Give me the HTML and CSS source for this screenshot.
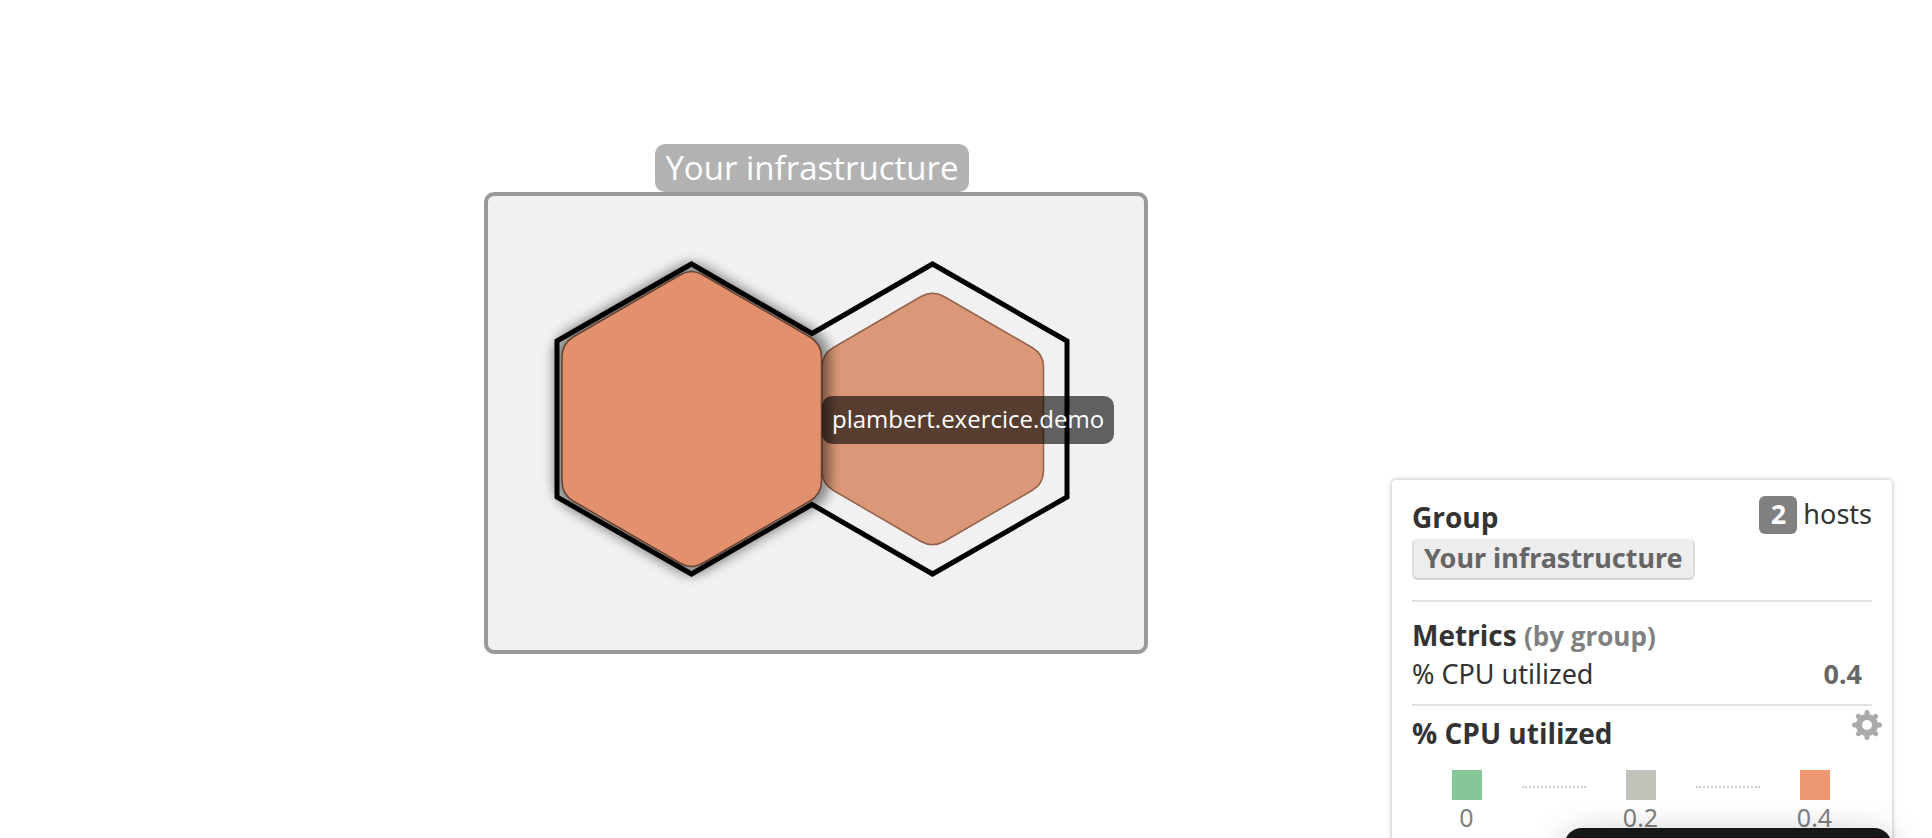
FILE: index.html
```html
<!DOCTYPE html>
<html lang="en">
<head>
<meta charset="utf-8">
<title>Host map</title>
<link rel="stylesheet" href="styles.css">
</head>
<body>
<main class="map">
  <section class="group" aria-labelledby="group-name">
    <h1 class="group-name" id="group-name">Your infrastructure</h1>
    <div class="group-box">
      <svg class="hosts" viewBox="488 196 656 454" aria-hidden="true">
        <defs>
          <filter id="shadow" x="-20%" y="-20%" width="140%" height="140%">
            <feGaussianBlur stdDeviation="6"/>
          </filter>
        </defs>
        <path class="hex hex-dim" d="M921 296.500Q932.500 290 944 296.500L1032 347.500Q1043.500 354 1043.500 367V471Q1043.500 484 1032 490.500L944 541.500Q932.500 548 921 541.500L833.500 490.500Q822 484 822 471V367Q822 354 833.500 347.500Z"/>
        <path class="hex-shadow" filter="url(#shadow)" d="M680 275Q691.500 268 703 275L810 337Q821.500 344 821.500 357V481Q821.500 494 810 501L703 563Q691.500 570 680 563L573 501Q562 494 562 481V357Q562 344 573 337Z"/>
        <path class="outline" d="M691.500 264L812 333.500L932.500 264L1067 341V497L932.500 574L812 504.500L691.500 574L557 497V341Z"/>
        <path class="hex hex-active" d="M680 275Q691.500 268 703 275L810 337Q821.500 344 821.500 357V481Q821.500 494 810 501L703 563Q691.500 570 680 563L573 501Q562 494 562 481V357Q562 344 573 337Z"/>
      </svg>
      <div class="tooltip" role="tooltip">plambert.exercice.demo</div>
    </div>
  </section>
</main>
<aside class="panel">
  <header class="panel-head">
    <div>
      <h2 class="title">Group</h2>
      <span class="tag">Your infrastructure</span>
    </div>
    <p class="count"><strong class="badge">2</strong>hosts</p>
  </header>
  <section class="metrics">
    <h2 class="title">Metrics <span class="muted">(by group)</span></h2>
    <div class="metric"><span>% CPU utilized</span><strong>0.4</strong></div>
  </section>
  <section class="scale">
    <h2 class="title">% CPU utilized</h2>
    <button class="settings" type="button" aria-label="Settings">
      <svg class="gear" viewBox="-15 -15 30 30" aria-hidden="true">
        <g class="teeth">
          <path d="M0-12.500V12.500M-12.500 0H12.500M-8.700-8.700L8.700 8.700M-8.700 8.700L8.700-8.700"/>
        </g>
        <circle class="gear-body" r="11"/>
        <circle class="gear-hole" r="5"/>
      </svg>
    </button>
    <div class="legend">
      <div class="stop"><span class="swatch low"></span>0</div>
      <span class="dots"></span>
      <div class="stop"><span class="swatch mid"></span>0.2</div>
      <span class="dots"></span>
      <div class="stop"><span class="swatch high"></span>0.4</div>
    </div>
  </section>
</aside>
<div class="dock"></div>
</body>
</html>
```
FILE: styles.css
```css
* { box-sizing: border-box; }

body {
  margin: 0;
  height: 100vh;
  overflow: hidden;
  position: relative;
  background: #fff;
  color: #333;
  font-family: "Open Sans", "Noto Sans", sans-serif;
  font-size: 27px;
  line-height: 36px;
}

h1, h2, p { margin: 0; }

.map { padding: 144px 0 0 484px; }

.group {
  width: 664px;
  display: flex;
  flex-direction: column;
  align-items: center;
}

.group-name {
  margin-right: 8px;
  padding: 0 10px;
  border-radius: 10px;
  background: #b2b2b2;
  color: #fff;
  font-size: 33px;
  font-weight: 400;
  line-height: 48px;
}

.group-box {
  position: relative;
  width: 100%;
  border: 4px solid #999;
  border-radius: 10px;
  background: #f1f1f1;
}

.hosts { display: block; width: 100%; }

.hex { stroke-width: 1.500px; }
.hex-dim { fill: #da9878; stroke: #93614a; }
.hex-active { fill: #e2906d; stroke: #65412f; }
.hex-shadow { fill: #000; stroke: #000; stroke-width: 17px; opacity: .44; }
.outline { fill: none; stroke: #000; stroke-width: 5px; }

.tooltip {
  position: absolute;
  left: 334px;
  top: 200px;
  padding: 0 10px 2px;
  border-radius: 10px;
  background: rgba(0, 0, 0, .6);
  color: #fff;
  font-size: 24px;
  line-height: 46px;
  white-space: nowrap;
}

.panel {
  position: absolute;
  top: 480px;
  right: 40px;
  width: 500px;
  padding: 16px 20px 24px;
  border-radius: 4px;
  background: #fff;
  box-shadow: 0 0 5px rgba(0, 0, 0, .3);
}

.panel-head {
  display: flex;
  justify-content: space-between;
  align-items: flex-start;
  padding-bottom: 20px;
}

.title { font-size: 28px; font-weight: 700; line-height: 42px; }
.muted { color: #808080; font-size: 26px; line-height: 26px; }

.tag {
  display: block;
  padding: 0 10px 2px;
  border: 2px solid #ddd;
  border-top-color: #f1f1f1;
  border-bottom-color: #d2d2d2;
  border-radius: 6px;
  background: #ededed;
  color: #666;
  font-family: "Noto Sans", "Open Sans", sans-serif;
  font-weight: 700;
  line-height: 36px;
}

.count {
  display: flex;
  gap: 6px;
  font-family: "Noto Sans", "Open Sans", sans-serif;
}

.badge {
  width: 38px;
  height: 38px;
  border-radius: 6px;
  background: #808080;
  color: #fff;
  text-align: center;
}

.metrics {
  padding: 12px 0;
  border-top: 2px solid #e1e1e1;
  border-bottom: 2px solid #e1e1e1;
}

.metric {
  display: flex;
  justify-content: space-between;
  padding-right: 10px;
  font-family: "Noto Sans", "Open Sans", sans-serif;
}

.metric strong { color: #666; }

.scale { position: relative; padding-top: 6px; }

.settings {
  position: absolute;
  top: 4px;
  right: -10px;
  width: 30px;
  height: 30px;
  padding: 0;
  border: 0;
  background: none;
}

.gear { display: block; }
.teeth { stroke: #aaa; stroke-width: 5px; stroke-linecap: round; }
.gear-body { fill: #aaa; }
.gear-hole { fill: #fff; }

.legend {
  display: grid;
  grid-template-columns: repeat(5, 1fr);
  padding: 16px 14px 0 11px;
  color: #808080;
  font-family: "Noto Sans", "Open Sans", sans-serif;
  font-size: 25px;
  line-height: 34px;
}

.stop {
  display: flex;
  flex-direction: column;
  align-items: center;
}

.swatch { width: 30px; height: 30px; }
.low { background: #85c799; }
.mid { background: #c3c2ba; }
.high { background: #ee9872; }

.dots {
  width: 64px;
  height: 18px;
  justify-self: center;
  border-bottom: 2px dotted #ccc;
}

.dock {
  position: absolute;
  right: 40px;
  bottom: -20px;
  width: 328px;
  height: 30px;
  border-top: 9px solid #151817;
  border-radius: 18px 18px 0 0;
  background: #1a060c;
  box-shadow: 0 10px 36px rgba(0, 0, 0, .3);
}
```
